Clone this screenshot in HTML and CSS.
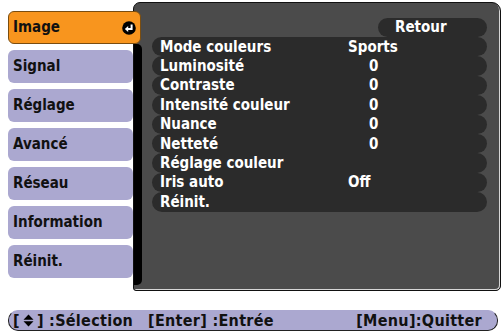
FILE: index.html
```html
<!DOCTYPE html>
<html lang="fr">
<head>
    <meta charset="UTF-8">
    <title>Image</title>
    <link rel="stylesheet" href="styles.css">
</head>
<body>

<div class="osd">
    <ul class="tabs">
        <li class="tab active">Image
            <svg class="enter-icon" width="14" height="14" viewBox="0 0 14 14">
                <circle cx="7" cy="7" r="6.8" fill="#000"/>
                <path d="M9.6 3.4V8.1H5" stroke="#fff" stroke-width="2" fill="none"/>
                <polygon points="2.8,8.1 6.2,5.1 6.2,11.1" fill="#fff"/>
            </svg>
        </li>
        <li class="tab">Signal</li>
        <li class="tab">Réglage</li>
        <li class="tab">Avancé</li>
        <li class="tab">Réseau</li>
        <li class="tab">Information</li>
        <li class="tab">Réinit.</li>
    </ul>

    <div class="panel">
        <div class="edge"></div>
        <div class="content">
            <div class="back">Retour</div>
            <div class="rows">
                <div class="row"><span class="label">Mode couleurs</span><span class="value">Sports</span></div>
                <div class="row"><span class="label">Luminosité</span><span class="value num">0</span></div>
                <div class="row"><span class="label">Contraste</span><span class="value num">0</span></div>
                <div class="row"><span class="label">Intensité couleur</span><span class="value num">0</span></div>
                <div class="row"><span class="label">Nuance</span><span class="value num">0</span></div>
                <div class="row"><span class="label">Netteté</span><span class="value num">0</span></div>
                <div class="row"><span class="label">Réglage couleur</span></div>
                <div class="row"><span class="label">Iris auto</span><span class="value">Off</span></div>
                <div class="row"><span class="label">Réinit.</span></div>
            </div>
        </div>
    </div>
</div>

<div class="footer">
    <span class="hint sel">[<svg class="updown" width="11" height="13" viewBox="0 0 11 13">
        <polygon points="0.5,5.7 5.5,0.5 10.5,5.7" fill="#000"/>
        <polygon points="0.5,7.3 5.5,12.5 10.5,7.3" fill="#000"/>
    </svg>] :Sélection</span>
    <span class="hint">[Enter] :Entrée</span>
    <span class="hint menu">[Menu]:Quitter</span>
</div>

</body>
</html>
```

FILE: styles.css
```css
body {
    margin: 0;
    background: #fff;
    font-family: "DejaVu Sans Condensed", "DejaVu Sans", sans-serif;
}
.osd {
    display: flex;
    padding: 2px 0 0 8px;
    height: 289px;
}
.tabs {
    list-style: none;
    margin: 9px 0 0 0;
    padding: 0;
    width: 125px;
    display: flex;
    flex-direction: column;
    gap: 6px;
}
.tab {
    height: 33px;
    box-sizing: border-box;
    padding-left: 5px;
    background: #aba8d0;
    border-radius: 6px;
    color: #111;
    font-size: 15px;
    font-weight: bold;
    line-height: 33px;
}
.tab.active {
    position: relative;
    z-index: 1;
    margin-right: -8px;
    padding: 0 4px 0 4px;
    background: #f8951e;
    border: 1px solid #7a4d10;
    line-height: 31px;
    display: flex;
    align-items: center;
    justify-content: space-between;
}
.enter-icon {
    display: block;
}
.panel {
    width: 368px;
    height: 289px;
    box-sizing: border-box;
    border: 1px solid #111;
    border-radius: 7px 9px 5px 3px;
    background: #4b4b4b;
    box-shadow: inset -1px -1px 0 #d6d6d6;
    display: grid;
    grid-template-columns: 8px 1fr;
}
.edge {
    margin: 41px 0 5px 0;
    background: #000;
    border-radius: 0 5px 5px 0;
}
.content {
    padding: 15px 13px 0 10px;
    display: flex;
    flex-direction: column;
    color: #fff;
    font-size: 15px;
    font-weight: bold;
}
.back {
    align-self: flex-end;
    width: 109px;
    height: 19px;
    box-sizing: border-box;
    padding-left: 17px;
    line-height: 19px;
    background: #2b2b2b;
    border-radius: 10px;
}
.row {
    height: 19.4px;
    display: flex;
    align-items: center;
    padding-left: 8px;
    background: #2b2b2b;
    border-radius: 10px;
}
.label {
    width: 188px;
}
.value.num {
    padding-left: 21px;
}
.footer {
    margin: 19px 6px 0 8px;
    height: 21px;
    box-sizing: border-box;
    padding: 0 15px 0 4px;
    background: #aba8d0;
    border: 1px solid #222;
    border-top-color: #aba8d0;
    border-radius: 10px;
    display: flex;
    align-items: center;
    color: #111;
    font-size: 16px;
    font-weight: bold;
    letter-spacing: 0.3px;
}
.sel {
    width: 135px;
}
.updown {
    margin: 0 3px;
    vertical-align: -1px;
}
.menu {
    margin-left: auto;
}
```
